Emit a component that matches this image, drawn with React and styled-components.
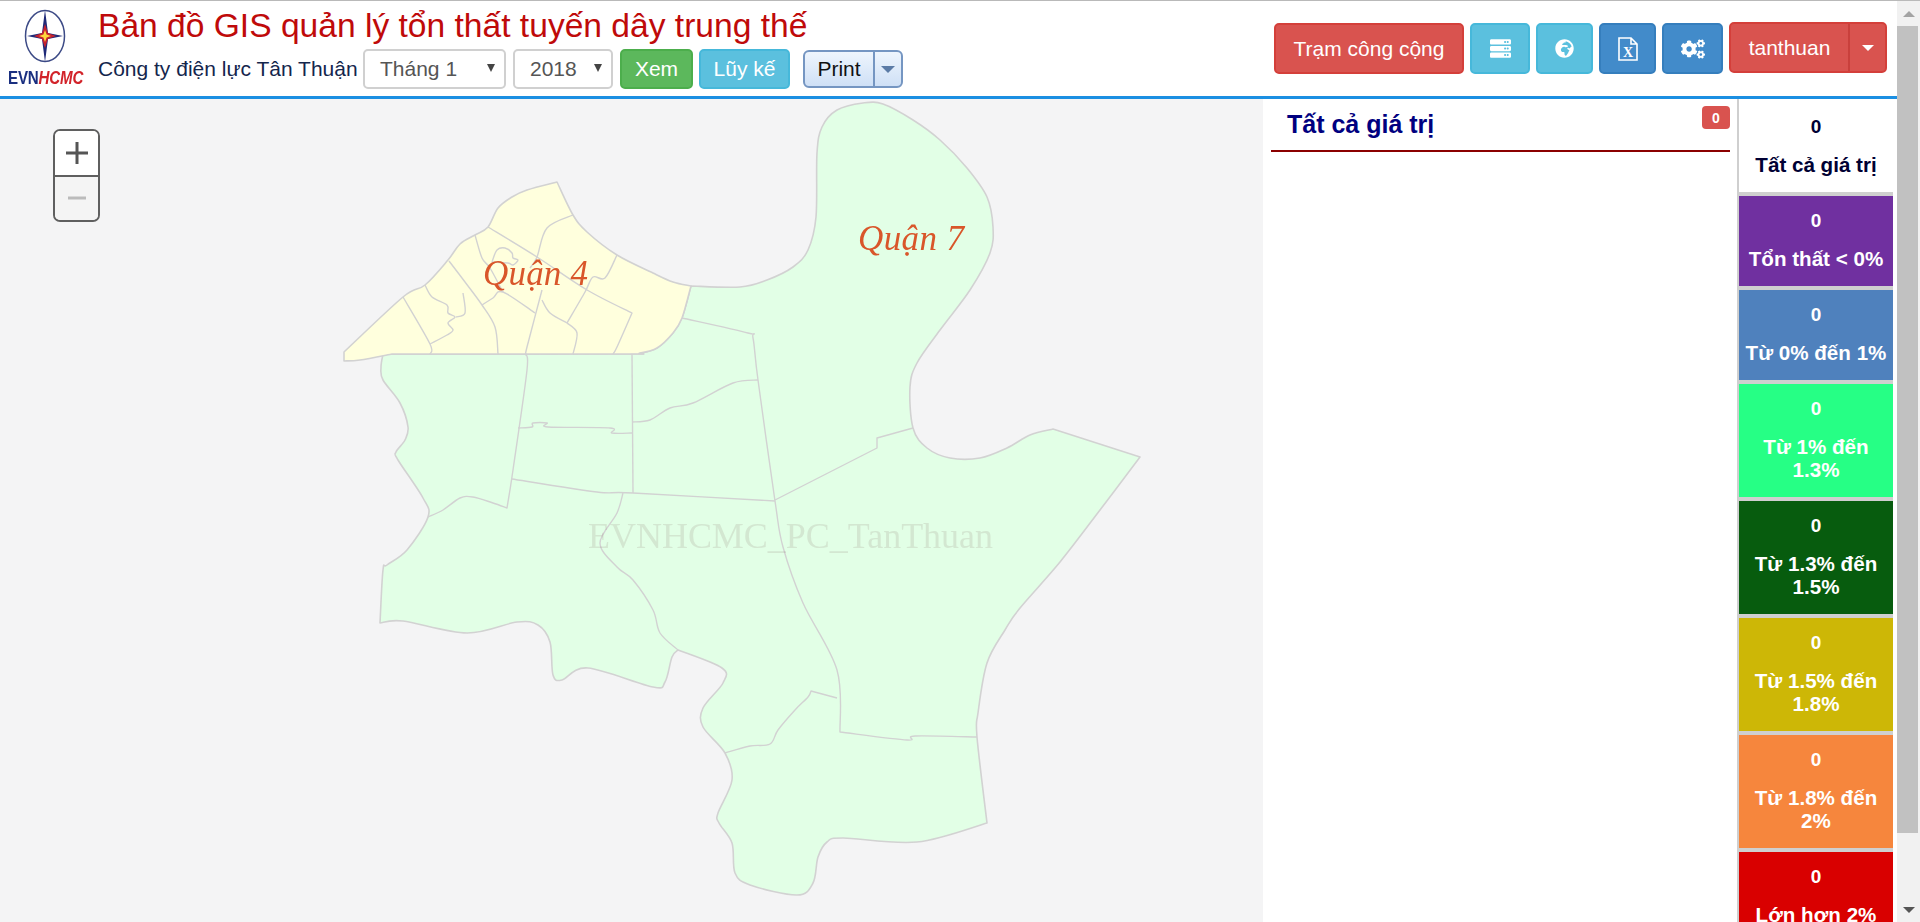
import React from "react";
import styled, { createGlobalStyle } from "styled-components";
import { FaCogs, FaGlobeAfrica, FaServer } from "react-icons/fa";

const GlobalStyle = createGlobalStyle`
  html, body {
    margin: 0;
    padding: 0;
    height: 100%;
    overflow: hidden;
    background: #fff;
    font-family: "Liberation Sans", Arial, sans-serif;
  }
  * { box-sizing: border-box; }
`;

// catmull-rom through the traced points, repeat a point to keep a sharp corner
const smooth = (pts, closed = false) => {
  const at = (i) => {
    if (closed) return pts[(i + pts.length) % pts.length];
    return pts[Math.max(0, Math.min(pts.length - 1, i))];
  };
  const end = closed ? pts.length : pts.length - 1;
  let d = `M${pts[0][0]} ${pts[0][1]}`;
  for (let i = 0; i < end; i++) {
    const [p0, p1, p2, p3] = [at(i - 1), at(i), at(i + 1), at(i + 2)];
    if (p1[0] === p2[0] && p1[1] === p2[1]) continue;
    const c1 = [p1[0] + (p2[0] - p0[0]) / 6, p1[1] + (p2[1] - p0[1]) / 6];
    const c2 = [p2[0] - (p3[0] - p1[0]) / 6, p2[1] - (p3[1] - p1[1]) / 6];
    d += `C${c1[0].toFixed(1)} ${c1[1].toFixed(1)} ${c2[0].toFixed(1)} ${c2[1].toFixed(1)} ${p2[0]} ${p2[1]}`;
  }
  return closed ? d + "Z" : d;
};

const district4 = [
  [344, 361], [344, 361], [344, 352], [344, 352], [403, 297], [425, 285], [448, 260], [460, 244], [475, 235],
  [488, 227], [498, 208], [512, 197], [527, 190], [557, 182], [557, 182], [573, 215], [587, 232],
  [617, 255], [653, 273], [673, 282], [691, 286], [691, 286], [682, 318], [673, 333], [657, 348],
  [640, 353], [620, 354], [392, 354], [392, 354], [360, 360],
];

const district7 = [
  [691, 286], [691, 286], [740, 287], [767, 280], [793, 267], [808, 250], [816, 217], [817, 153], [822, 127],
  [837, 110], [863, 103], [883, 104], [913, 120], [940, 140], [967, 168], [987, 197], [993, 227],
  [990, 253], [970, 290], [940, 330], [917, 363], [910, 387], [913, 428], [927, 448], [950, 458],
  [980, 458], [1007, 448], [1030, 435], [1053, 429], [1053, 429], [1140, 457], [1140, 457], [1100, 510], [1060, 562], [1020, 608],
  [1005, 630], [987, 663], [978, 713], [977, 737], [987, 823], [987, 823], [917, 842], [843, 838],
  [827, 842], [818, 857], [813, 883], [797, 895], [750, 885], [735, 873], [732, 843], [719, 823],
  [718, 813], [732, 780], [725, 753], [703, 727], [703, 708], [723, 683], [722, 668], [678, 650], [678, 650],
  [672, 657], [665, 682], [653, 687], [588, 668], [562, 680], [553, 675], [550, 642], [538, 625],
  [517, 622], [467, 633], [403, 621], [380, 623], [380, 623], [383, 570], [387, 565], [407, 550], [428, 517],
  [423, 498], [398, 460], [396, 452], [405, 440], [408, 427], [400, 403], [383, 380], [381, 367],
  [383, 354], [383, 354], [620, 354], [640, 353], [657, 348], [673, 333], [682, 318],
];

const wards = [
  [[403, 297], [430, 344], [430, 354]],
  [[425, 285], [432, 297], [447, 305], [448, 313], [455, 317], [448, 323], [453, 330], [447, 335], [430, 344]],
  [[449, 261], [465, 282], [482, 305], [495, 327], [498, 354]],
  [[463, 293], [465, 313], [456, 317]],
  [[475, 235], [482, 258], [490, 268], [503, 292]],
  [[492, 262], [497, 250], [505, 248], [512, 253], [513, 258], [518, 260], [513, 265], [508, 263], [492, 262]],
  [[488, 227], [537, 257], [587, 290], [632, 313], [632, 313], [617, 347], [613, 354]],
  [[573, 215], [547, 228], [537, 257], [530, 268]],
  [[617, 255], [605, 278], [593, 277], [585, 292], [567, 323]],
  [[567, 323], [577, 333], [573, 354]],
  [[542, 290], [527, 347], [526, 354]],
  [[542, 300], [550, 313], [567, 323]],
  [[482, 305], [493, 298], [503, 292], [535, 313]],
  [[525, 354], [527, 370], [513, 470], [507, 508], [507, 508], [493, 503], [473, 497], [460, 498], [443, 510], [428, 517]],
  [[518, 428], [532, 427], [533, 423], [547, 423], [548, 427], [610, 428], [612, 433], [632, 433]],
  [[632, 354], [633, 493]],
  [[512, 479], [597, 492], [633, 493], [775, 501]],
  [[682, 318], [748, 333], [753, 338], [758, 380], [775, 501], [783, 547], [803, 603], [837, 670], [840, 732], [840, 732], [907, 740], [915, 736], [977, 737]],
  [[632, 422], [650, 420], [670, 408], [693, 403], [733, 383], [758, 380]],
  [[775, 500], [877, 448], [877, 448], [877, 438], [877, 438], [913, 428]],
  [[623, 493], [617, 513], [600, 543], [617, 567], [633, 580], [653, 610], [660, 633], [678, 650]],
  [[725, 753], [750, 746], [770, 744], [778, 730], [795, 710], [808, 697], [811, 691], [811, 691], [837, 698]],
];

const legend = [
  { label: "Tổn thất < 0%", color: "#7030a0" },
  { label: "Từ 0% đến 1%", color: "#4f81bd" },
  { label: "Từ 1% đến 1.3%", color: "#26ff85" },
  { label: "Từ 1.3% đến 1.5%", color: "#075c0e" },
  { label: "Từ 1.5% đến 1.8%", color: "#cdb706" },
  { label: "Từ 1.8% đến 2%", color: "#f6863d" },
  { label: "Lớn hơn 2%", color: "#d90000" },
];

const Page = styled.div`
  display: flex;
  height: 922px;
  overflow: hidden;
  border-top: 1px solid #b9b9b9;
`;

const Main = styled.div`
  flex: 1;
  min-width: 0;
  display: flex;
  flex-direction: column;
`;

const Header = styled.header`
  flex: none;
  height: 98px;
  display: flex;
  justify-content: space-between;
  background: #fff;
  border-bottom: 3px solid #1b8fe2;
`;

const Brand = styled.div`
  display: flex;
`;

const Logo = styled.div`
  width: 98px;
  flex: none;
  padding: 8px 0 0 8px;
`;

const LogoText = styled.div`
  margin-top: 7px;
  font-size: 18px;
  line-height: 17px;
  font-weight: 700;
  letter-spacing: -0.2px;
  color: #1a2f80;
  white-space: nowrap;
  transform: scaleX(0.84);
  transform-origin: left center;

  em {
    color: #d2232a;
  }
`;

const Titles = styled.div`
  display: flex;
  flex-direction: column;
`;

const Title = styled.h1`
  margin: 6px 0 0;
  font-size: 33.6px;
  line-height: 38px;
  font-weight: 400;
  color: #bf0a0a;
  white-space: nowrap;
`;

const Filters = styled.div`
  display: flex;
  align-items: center;
  margin-top: 4px;
`;

const Company = styled.span`
  width: 265px;
  flex: none;
  font-size: 21px;
  color: #14264d;
  white-space: nowrap;
`;

const Select = styled.div`
  position: relative;
  width: ${(p) => p.$width}px;
  height: 40px;
  margin-right: 7px;
  padding-left: 15px;
  display: flex;
  align-items: center;
  background: #fff;
  border: 2px solid #d0d0d0;
  border-radius: 5px;
  font-size: 21px;
  color: #555;

  &::after {
    content: "";
    position: absolute;
    right: 9px;
    top: 13px;
    border-left: 4px solid transparent;
    border-right: 4px solid transparent;
    border-top: 8px solid #444;
  }
`;

const tones = {
  green: ["#5cb85c", "#4cae4c"],
  teal: ["#5bc0de", "#46b8da"],
  blue: ["#428bca", "#357ebd"],
  red: ["#d9534f", "#d43f3a"],
};

const Button = styled.button`
  width: ${(p) => p.$width}px;
  height: ${(p) => p.$height || 40}px;
  margin-right: ${(p) => p.$gap || 0}px;
  padding: 0;
  display: flex;
  align-items: center;
  justify-content: center;
  font: 400 21px "Liberation Sans", Arial, sans-serif;
  color: #fff;
  background: ${(p) => tones[p.$tone][0]};
  border: 2px solid ${(p) => tones[p.$tone][1]};
  border-radius: 5px;
`;

const PrintGroup = styled.div`
  display: flex;
  height: 38px;
  margin: 0 0 0 13px;
  width: 100px;
  border: 2px solid #7596c2;
  border-radius: 6px;
  overflow: hidden;
  color: #111;
  font-size: 21px;
  background: linear-gradient(#eef5fd, #cfe0f6);
`;

const PrintLabel = styled.div`
  width: 70px;
  display: flex;
  align-items: center;
  justify-content: center;
  border-right: 2px solid #7596c2;
`;

const PrintArrow = styled.div`
  flex: 1;
  display: flex;
  align-items: center;
  justify-content: center;

  &::after {
    content: "";
    border-left: 7px solid transparent;
    border-right: 7px solid transparent;
    border-top: 7px solid #5b7ba6;
  }
`;

const Actions = styled.div`
  display: flex;
  gap: 6px;
  padding: 22px 10px 0 0;
`;

const SplitButton = styled.div`
  display: flex;
  width: 158px;
  height: 51px;
  margin-top: -1px;
  color: #fff;
  font-size: 21px;
  background: #d9534f;
  border: 2px solid #d43f3a;
  border-radius: 5px;
`;

const SplitLabel = styled.div`
  width: 119px;
  display: flex;
  align-items: center;
  justify-content: center;
  border-right: 2px solid #c9403c;
`;

const SplitCaret = styled.div`
  flex: 1;
  display: flex;
  align-items: center;
  justify-content: center;

  &::after {
    content: "";
    border-left: 6px solid transparent;
    border-right: 6px solid transparent;
    border-top: 6px solid #fff;
  }
`;

const Body = styled.div`
  flex: 1;
  min-height: 0;
  display: flex;
`;

const MapPane = styled.div`
  position: relative;
  width: 1263px;
  flex: none;
  background: #f4f4f5;

  > svg {
    display: block;
    filter: blur(0.4px);
  }
`;

const ZoomControl = styled.div`
  position: absolute;
  left: 53px;
  top: 30px;
  width: 47px;
  height: 93px;
  border: 2px solid #5f5f5f;
  border-radius: 7px;
  overflow: hidden;
  display: flex;
  flex-direction: column;
`;

const ZoomButton = styled.div`
  flex: 1;
  display: flex;
  align-items: center;
  justify-content: center;
  background: ${(p) => (p.$disabled ? "#f4f4f4" : "#fff")};
  color: ${(p) => (p.$disabled ? "#bbb" : "#555")};

  & + & {
    border-top: 2px solid #5f5f5f;
  }
`;

const ListPanel = styled.section`
  flex: 1;
  min-width: 0;
  background: #fff;
  padding: 0 7px 0 8px;
`;

const PanelHead = styled.div`
  position: relative;
  height: 53px;
  padding: 10px 0 0 16px;
  border-bottom: 2px solid #8b0000;
`;

const PanelTitle = styled.h2`
  margin: 0;
  font-size: 25px;
  line-height: 30px;
  font-weight: 700;
  color: #000080;
`;

const Badge = styled.span`
  position: absolute;
  right: 0;
  top: 7px;
  width: 28px;
  height: 23px;
  display: flex;
  align-items: center;
  justify-content: center;
  border-radius: 4px;
  background: #d9534f;
  color: #fff;
  font-size: 14px;
  font-weight: 700;
`;

const Strip = styled.aside`
  width: 158px;
  flex: none;
  display: flex;
  flex-direction: column;
  gap: 4px;
  padding-left: 2px;
  background: linear-gradient(to right, #cfcfcf 156px, #fff 156px);
  margin-right: 2px;
`;

const Tile = styled.div`
  flex: none;
  width: 154px;
  padding: ${(p) => (p.$lead ? "16px" : "13px")} 2px 16px;
  text-align: center;
  font-size: 20.6px;
  font-weight: 700;
  line-height: 23px;
  color: ${(p) => (p.$lead ? "#000033" : "#fff")};
  background: ${(p) => p.$color};
`;

const TileCount = styled.div`
  margin-bottom: 15px;
  font-size: 19px;
`;

const Scrollbar = styled.div`
  width: 23px;
  flex: none;
  display: flex;
  flex-direction: column;
  background: #f1f1f1;
`;

const ScrollArrow = styled.div`
  height: 25px;
  flex: none;
  display: flex;
  align-items: center;
  justify-content: center;
  margin-top: ${(p) => (p.$down ? "auto" : 0)};

  &::after {
    content: "";
    border-left: 6px solid transparent;
    border-right: 6px solid transparent;
    ${(p) => (p.$down ? "border-top: 6px solid #555;" : "border-bottom: 6px solid #a3a3a3;")}
  }
`;

const ScrollThumb = styled.div`
  height: 807px;
  margin-right: 2px;
  background: #c1c1c1;
`;

const LogoMark = () => (
  <svg width="42" height="54" viewBox="0 0 42 54" style={{ display: "block", marginLeft: "16px" }}>
    <ellipse cx="21" cy="27" rx="19.5" ry="25.5" fill="#fff" stroke="#3c4a86" strokeWidth="1.5" />
    <path d="M21 1 L24 24 L39 27 L24 30 L21 53 L18 30 L3 27 L18 24 Z" fill="#1f2a78" />
    <path d="M21 15 L24 24 L32 27 L24 30 L21 39 L18 30 L10 27 L18 24 Z" fill="#c5212f" />
    <path d="M21 21 L22.6 25.4 L27 27 L22.6 28.6 L21 33 L19.4 28.6 L15 27 L19.4 25.4 Z" fill="#ffd83a" />
  </svg>
);

const ExcelFile = () => (
  <svg width="20" height="24" viewBox="0 0 20 24">
    <path d="M1 1h12l6 6v16H1z M13 1v6h6" fill="none" stroke="#fff" strokeWidth="1.6" />
    <text x="10" y="20" textAnchor="middle" fontFamily="'Liberation Serif', serif" fontWeight="700" fontSize="14" fill="#fff">X</text>
  </svg>
);

const DistrictMap = () => (
  <svg width="1263" height="823" viewBox="0 99 1263 823">
    <g stroke="#d2d2d2" strokeWidth="1.6" strokeLinejoin="round">
      <path d={smooth(district7, true)} fill="#e2ffe6" />
      <path d={smooth(district4, true)} fill="#ffffdd" />
    </g>
    <g fill="none" stroke="#d2d2d2" strokeWidth="1.4" strokeLinejoin="round">
      {wards.map((w, i) => (
        <path key={i} d={smooth(w)} />
      ))}
    </g>
    <g fontFamily="'Liberation Serif', serif" fontStyle="italic" fontSize="35" fill="#d9562a">
      <text x="483" y="285" textLength="105">Quận 4</text>
      <text x="858" y="250" textLength="106">Quận 7</text>
    </g>
    <text x="588" y="548" fontFamily="'Liberation Serif', serif" fontSize="36" textLength="405" fill="#806060" fillOpacity="0.15">
      EVNHCMC_PC_TanThuan
    </text>
  </svg>
);

export default function App() {
  return (
    <>
      <GlobalStyle />
      <Page>
        <Main>
          <Header>
            <Brand>
              <Logo>
                <LogoMark />
                <LogoText>
                  EVN<em>HCMC</em>
                </LogoText>
              </Logo>
              <Titles>
                <Title>Bản đồ GIS quản lý tổn thất tuyến dây trung thế</Title>
                <Filters>
                  <Company>Công ty điện lực Tân Thuận</Company>
                  <Select $width={143}>Tháng 1</Select>
                  <Select $width={100}>2018</Select>
                  <Button $tone="green" $width={73} $gap={6}>Xem</Button>
                  <Button $tone="teal" $width={91}>Lũy kế</Button>
                  <PrintGroup>
                    <PrintLabel>Print</PrintLabel>
                    <PrintArrow />
                  </PrintGroup>
                </Filters>
              </Titles>
            </Brand>
            <Actions>
              <Button $tone="red" $width={190} $height={51}>Trạm công cộng</Button>
              <Button $tone="teal" $width={60} $height={51}><FaServer size={21} /></Button>
              <Button $tone="teal" $width={57} $height={51}><FaGlobeAfrica size={19} /></Button>
              <Button $tone="blue" $width={57} $height={51}><ExcelFile /></Button>
              <Button $tone="blue" $width={61} $height={51}><FaCogs size={24} /></Button>
              <SplitButton>
                <SplitLabel>tanthuan</SplitLabel>
                <SplitCaret />
              </SplitButton>
            </Actions>
          </Header>
          <Body>
            <MapPane>
              <DistrictMap />
              <ZoomControl>
                <ZoomButton>
                  <svg width="24" height="24" viewBox="0 0 24 24"><path d="M12 1v22M1 12h22" stroke="currentColor" strokeWidth="3" /></svg>
                </ZoomButton>
                <ZoomButton $disabled>
                  <svg width="20" height="4" viewBox="0 0 20 4"><path d="M1 2h18" stroke="currentColor" strokeWidth="3" /></svg>
                </ZoomButton>
              </ZoomControl>
            </MapPane>
            <ListPanel>
              <PanelHead>
                <PanelTitle>Tất cả giá trị</PanelTitle>
                <Badge>0</Badge>
              </PanelHead>
            </ListPanel>
            <Strip>
              <Tile $color="#fff" $lead>
                <TileCount>0</TileCount>
                Tất cả giá trị
              </Tile>
              {legend.map((item) => (
                <Tile key={item.label} $color={item.color}>
                  <TileCount>0</TileCount>
                  {item.label}
                </Tile>
              ))}
            </Strip>
          </Body>
        </Main>
        <Scrollbar>
          <ScrollArrow />
          <ScrollThumb />
          <ScrollArrow $down />
        </Scrollbar>
      </Page>
    </>
  );
}
